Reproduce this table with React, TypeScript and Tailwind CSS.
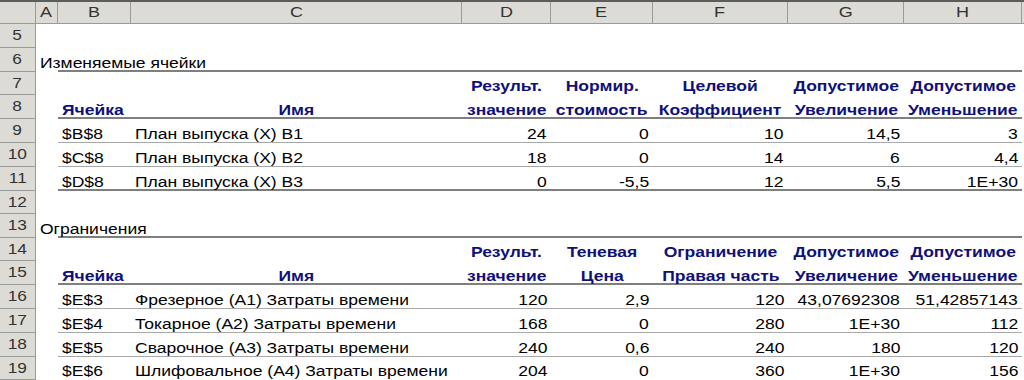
import React from 'react';

type Cell = { t?: string; a?: 'l' | 'c' | 'r'; h?: boolean };
type Row = { n: number; h: number; b?: 'thick' | 'thin'; title?: string; cells?: Cell[] };

// widths of columns A..H in px
const cols = [
  { k: 'A', w: 22 },
  { k: 'B', w: 73 },
  { k: 'C', w: 331 },
  { k: 'D', w: 89 },
  { k: 'E', w: 102 },
  { k: 'F', w: 135 },
  { k: 'G', w: 116 },
  { k: 'H', w: 118 },
];

const hd = (t: string, a: 'l' | 'c' = 'c'): Cell => ({ t, a, h: true });
const num = (t: string): Cell => ({ t, a: 'r' });

const rows: Row[] = [
  { n: 5, h: 24 },
  { n: 6, h: 24, b: 'thick', title: 'Изменяемые ячейки' },
  { n: 7, h: 23, cells: [{}, {}, {}, hd('Результ.'), hd('Нормир.'), hd('Целевой'), hd('Допустимое'), hd('Допустимое')] },
  { n: 8, h: 24, b: 'thick', cells: [{}, hd('Ячейка', 'l'), hd('Имя'), hd('значение'), hd('стоимость'), hd('Коэффициент'), hd('Увеличение'), hd('Уменьшение')] },
  { n: 9, h: 24, b: 'thin', cells: [{}, { t: '$B$8' }, { t: 'План выпуска (X) B1' }, num('24'), num('0'), num('10'), num('14,5'), num('3')] },
  { n: 10, h: 24, b: 'thin', cells: [{}, { t: '$C$8' }, { t: 'План выпуска (X) B2' }, num('18'), num('0'), num('14'), num('6'), num('4,4')] },
  { n: 11, h: 24, b: 'thick', cells: [{}, { t: '$D$8' }, { t: 'План выпуска (X) B3' }, num('0'), num('-5,5'), num('12'), num('5,5'), num('1E+30')] },
  { n: 12, h: 23 },
  { n: 13, h: 24, b: 'thick', title: 'Ограничения' },
  { n: 14, h: 23, cells: [{}, {}, {}, hd('Результ.'), hd('Теневая'), hd('Ограничение'), hd('Допустимое'), hd('Допустимое')] },
  { n: 15, h: 24, b: 'thick', cells: [{}, hd('Ячейка', 'l'), hd('Имя'), hd('значение'), hd('Цена'), hd('Правая часть'), hd('Увеличение'), hd('Уменьшение')] },
  { n: 16, h: 24, b: 'thin', cells: [{}, { t: '$E$3' }, { t: 'Фрезерное (А1) Затраты времени' }, num('120'), num('2,9'), num('120'), num('43,07692308'), num('51,42857143')] },
  { n: 17, h: 24, b: 'thin', cells: [{}, { t: '$E$4' }, { t: 'Токарное (А2) Затраты времени' }, num('168'), num('0'), num('280'), num('1E+30'), num('112')] },
  { n: 18, h: 24, b: 'thin', cells: [{}, { t: '$E$5' }, { t: 'Сварочное (А3) Затраты времени' }, num('240'), num('0,6'), num('240'), num('180'), num('120')] },
  { n: 19, h: 23, cells: [{}, { t: '$E$6' }, { t: 'Шлифовальное (А4) Затраты времени' }, num('204'), num('0'), num('360'), num('1E+30'), num('156')] },
];

const font = { fontFamily: '"Liberation Sans", Arial, sans-serif' };

const SheetRow: React.FC<{ row: Row }> = ({ row }) => {
  return (
    <div className="flex" style={{ height: row.h }}>
      {/* row number */}
      <div className="w-[36px] shrink-0 flex items-center justify-center bg-[#dddbd6] border-r border-b border-[#9a9a9a] text-[15px] text-[#333]">
        <span className="inline-block scale-x-[1.15] origin-center">{row.n}</span>
      </div>
      {cols.map((c, i) => {
        const cell = row.cells?.[i];
        // borders drawn as inset shadows so the text sits the same in every row
        const border =
          i === 0 || !row.b
            ? ''
            : row.b === 'thick'
            ? 'shadow-[inset_0_-2px_0_#7f7f7f]'
            : 'shadow-[inset_0_-1px_0_#a8a8a8]';
        const align =
          cell?.a === 'r' ? 'justify-end' : cell?.a === 'c' ? 'justify-center' : 'justify-start';
        const origin =
          cell?.a === 'r' ? 'origin-right' : cell?.a === 'c' ? 'origin-center' : 'origin-left';
        const text = i === 0 ? row.title : cell?.t;
        return (
          <div
            key={c.k}
            className={`shrink-0 flex items-end px-[4px] pb-[1px] whitespace-nowrap text-[14px] leading-[16px] ${border} ${align} ${
              cell?.h ? 'font-bold text-[#10107a]' : 'text-black'
            }`}
            style={{ width: c.w }}
          >
            {text && <span className={`relative z-10 inline-block scale-x-[1.25] ${origin}`}>{text}</span>}
          </div>
        );
      })}
    </div>
  );
};

export default function App() {
  return (
    <div className="w-[1024px] h-[380px] overflow-hidden bg-white" style={font}>
      {/* Column headers */}
      <div className="flex h-[24px] bg-[#dddbd6] border-t-2 border-[#5c5c5c]">
        <div className="w-[36px] shrink-0 border-r border-b border-[#9a9a9a]" />
        {cols.map((c) => (
          <div
            key={c.k}
            className="shrink-0 flex items-center justify-center border-r border-b border-[#9a9a9a] text-[15px] text-[#333]"
            style={{ width: c.w }}
          >
            <span className="inline-block scale-x-[1.2] origin-center">{c.k}</span>
          </div>
        ))}
        <div className="flex-1 border-b border-[#9a9a9a]" />
      </div>
      {rows.map((r) => (
        <SheetRow key={r.n} row={r} />
      ))}
    </div>
  );
}
